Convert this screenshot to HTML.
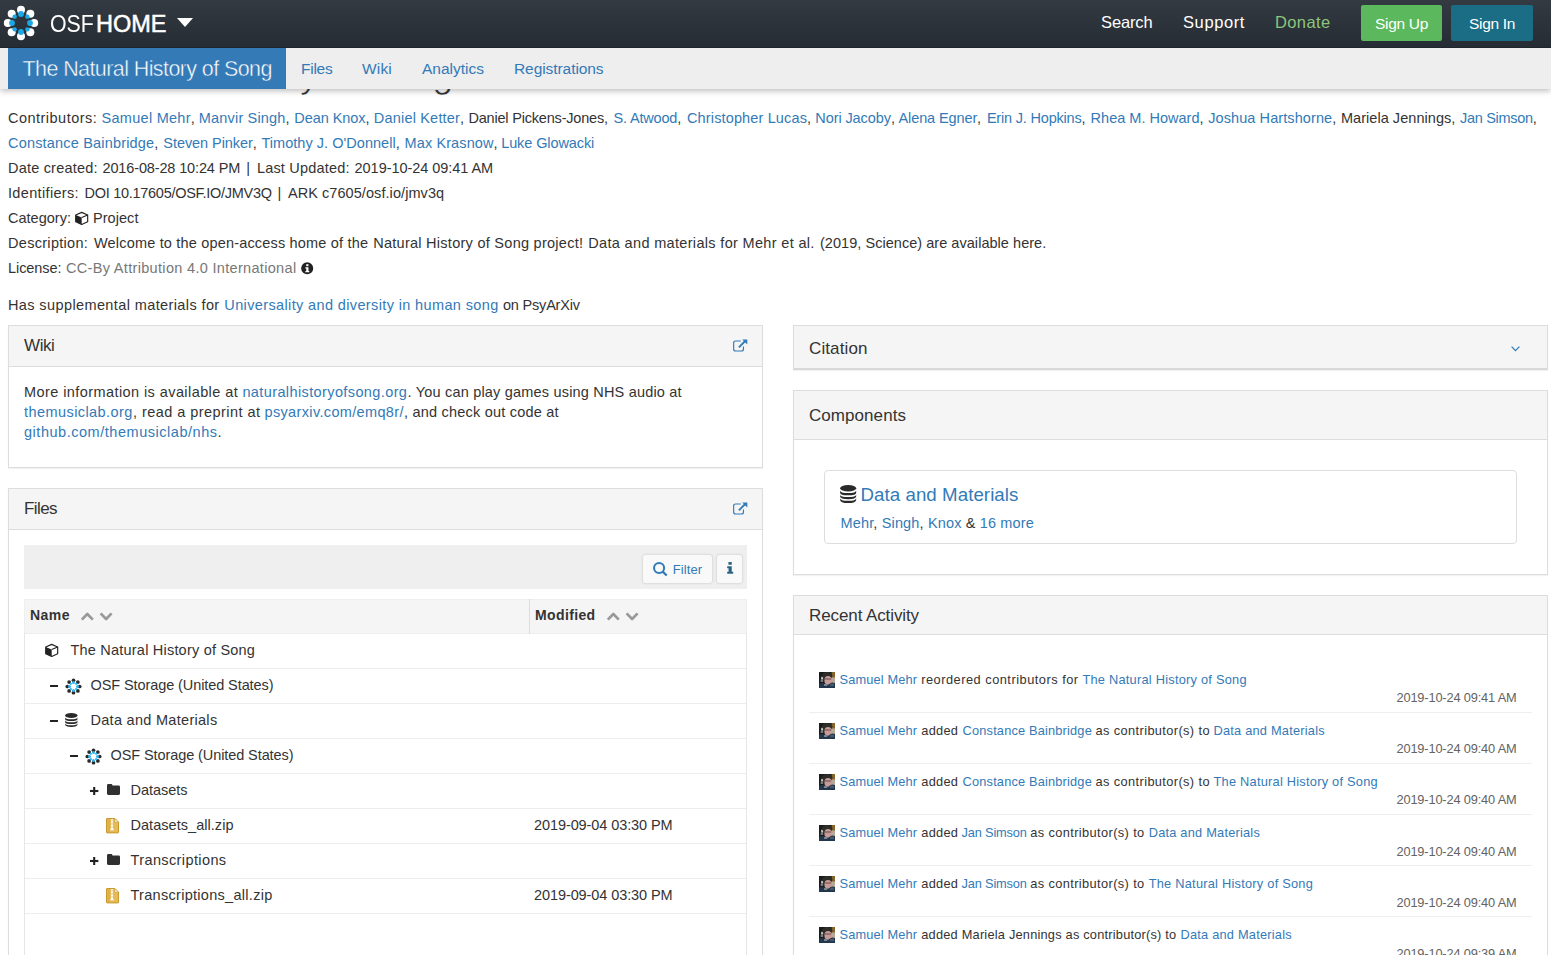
<!DOCTYPE html>
<html lang="en"><head>
<meta charset="utf-8">
<title>OSF | The Natural History of Song</title>
<style>
*{box-sizing:border-box}
html,body{margin:0;padding:0}
body{width:1551px;height:955px;overflow:hidden;background:#fff;color:#333;font-family:"Liberation Sans",sans-serif;font-size:14.5px;line-height:20px;position:relative}
a{color:#337ab7;text-decoration:none}
svg{display:block;position:absolute;overflow:visible}
.t{position:absolute;white-space:nowrap;line-height:20px;font-size:14.5px}
/* top navbar */
#nav{position:absolute;left:0;top:0;width:1551px;height:48px;background:linear-gradient(#333a42,#262c33);border-bottom:1px solid #1e252b;z-index:5}
#brand{font-size:23.5px;color:#fff;line-height:30px}
#brand2{font-size:23.5px;color:#fff;line-height:30px;-webkit-text-stroke:.5px #fff}
#caret{position:absolute;left:177px;top:18px;width:0;height:0;border-left:8px solid transparent;border-right:8px solid transparent;border-top:9px solid #fff}
.nl{font-size:16.5px;color:#fff}
.btn{position:absolute;top:5px;height:36px;color:#fff;border-radius:2px}
.btn span{font-size:15.5px;color:#fff}
/* project nav */
#pnav{position:absolute;left:0;top:48px;width:1551px;height:41px;background:#eee;box-shadow:0 2px 6px rgba(0,0,0,.26);z-index:4}
#ptab{position:absolute;left:8px;top:0;width:278px;height:41px;background:#337ab7}
#ptab span{font-size:21.5px;color:#fff;-webkit-text-stroke:.45px #337ab7}
.pl{font-size:15.5px;color:#337ab7}
#h2{font-size:38px;line-height:50px;color:#333;z-index:1;-webkit-text-stroke:.7px #fff}
/* panels */
.panel{position:absolute;background:#fff;border:1px solid #ddd;box-shadow:0 1px 1px rgba(0,0,0,.05)}
.ph{position:absolute;left:0;top:0;right:0;background:#f5f5f5;border-bottom:1px solid #ddd}
.pt{font-size:17px;color:#333}
.hr{position:absolute;height:1px;background:#eee}
.act{font-size:12.8px}
.dt{font-size:12.8px;color:#636363}
.row{position:absolute;left:25px;width:721px;height:1px;background:#ededed}
.av{position:absolute;width:16px;height:16px;left:819px;background:#2b2a2c;overflow:hidden}
.av svg{position:absolute;left:0;top:0;filter:blur(.6px)}
</style>
</head>
<body>
<div id="nav">
  <svg width="36" height="36" viewBox="-18 -18 36 36" style="left:3.4px;top:5.3px">
    <g fill="#fff">
      <circle cx="0" cy="-13.2" r="4"></circle><circle cx="9.33" cy="-9.33" r="4"></circle><circle cx="13.2" cy="0" r="4"></circle><circle cx="9.33" cy="9.33" r="4"></circle>
      <circle cx="0" cy="13.2" r="4"></circle><circle cx="-9.33" cy="9.33" r="4"></circle><circle cx="-13.2" cy="0" r="4"></circle><circle cx="-9.33" cy="-9.33" r="4"></circle>
    </g>
    <g fill="#1aa9e6">
      <circle cx="0" cy="-9" r="2.9"></circle><circle cx="6.36" cy="-6.36" r="2.2"></circle><circle cx="9" cy="0" r="2.9"></circle><circle cx="6.36" cy="6.36" r="2.2"></circle>
      <circle cx="0" cy="9" r="2.9"></circle><circle cx="-6.36" cy="6.36" r="2.2"></circle><circle cx="-9" cy="0" r="2.9"></circle><circle cx="-6.36" cy="-6.36" r="2.2"></circle>
    </g>
  </svg>
  <div id="brand" class="t" style="left: 49.7px; top: 8.5px;"><span style="display:inline-block;transform:scaleX(.908);transform-origin:0 50%">OSF</span></div>
  <div id="brand2" class="t" style="left: 95.9px; top: 8.5px;"><span style="letter-spacing: 0.05px;">HOME</span></div>
  <div id="caret"></div>
  <a class="t nl" style="left: 1101px; letter-spacing: -0.13px; top: 12px;">Search</a>
  <a class="t nl" style="left: 1183px; letter-spacing: 0.6px; top: 12px;">Support</a>
  <a class="t nl" style="left: 1275px; color: rgb(140, 198, 122); letter-spacing: 0.38px; top: 12px;">Donate</a>
  <div class="btn" style="left:1361px;width:81px;background:#5cb85c"><span class="t" style="left: 14px; letter-spacing: -0.31px; top: 8.9px;">Sign Up</span></div>
  <div class="btn" style="left:1451px;width:82px;background:#1b6d85"><span class="t" style="left: 18px; letter-spacing: -0.32px; top: 8.9px;">Sign In</span></div>
</div>
<div id="pnav">
  <div id="ptab"><span class="t" style="left: 14.5px; letter-spacing: -0.59px; top: 11.2px;">The Natural History of Song</span></div>
  <a class="t pl" style="left: 301px; letter-spacing: -0.25px; top: 10.5px;">Files</a>
  <a class="t pl" style="left: 362px; letter-spacing: 0.18px; top: 10.5px;">Wiki</a>
  <a class="t pl" style="left: 422px; letter-spacing: 0px; top: 10.5px;">Analytics</a>
  <a class="t pl" style="left: 514px; letter-spacing: -0.07px; top: 10.5px;">Registrations</a>
</div>
<div id="h2" class="t" style="left: 8px; letter-spacing: -0.9px; top: 48.5px;">The Natural History of Song</div>

<!-- metadata -->
<div class="t" style="left: 8px; top: 108px;"><span style="letter-spacing: 0.48px;">Contributors:</span></div>
<div class="t" style="left: 101.6px; top: 108px;"><a style="letter-spacing: 0.27px;">Samuel Mehr</a>,</div>
<div class="t" style="left: 198.8px; top: 108px;"><a style="letter-spacing: 0.18px;">Manvir Singh</a>,</div>
<div class="t" style="left: 294.3px; top: 108px;"><a style="letter-spacing: -0.07px;">Dean Knox</a>,</div>
<div class="t" style="left: 373.8px; top: 108px;"><a style="letter-spacing: 0.19px;">Daniel Ketter</a>,</div>
<div class="t" style="left: 468.4px; top: 108px;"><span style="letter-spacing: -0.19px;">Daniel Pickens-Jones</span>,</div>
<div class="t" style="left: 613.5px; top: 108px;"><a style="letter-spacing: -0.18px;">S. Atwood</a>,</div>
<div class="t" style="left: 687px; top: 108px;"><a style="letter-spacing: 0.14px;">Christopher Lucas</a>,</div>
<div class="t" style="left: 815.3px; top: 108px;"><a style="letter-spacing: -0.09px;">Nori Jacoby</a>,</div>
<div class="t" style="left: 898.5px; top: 108px;"><a style="letter-spacing: -0.11px;">Alena Egner</a>,</div>
<div class="t" style="left: 986.9px; top: 108px;"><a style="letter-spacing: -0.19px;">Erin J. Hopkins</a>,</div>
<div class="t" style="left: 1090.6px; top: 108px;"><a style="letter-spacing: 0.01px;">Rhea M. Howard</a>,</div>
<div class="t" style="left: 1208.2px; top: 108px;"><a style="letter-spacing: 0.09px;">Joshua Hartshorne</a>,</div>
<div class="t" style="left: 1340.9px; top: 108px;"><span style="letter-spacing: 0.05px;">Mariela Jennings</span>,</div>
<div class="t" style="left: 1460px; top: 108px;"><a style="letter-spacing: -0.31px;">Jan Simson</a>,</div>
<div class="t" style="left: 8px; top: 133px;"><a style="letter-spacing: 0.18px;">Constance Bainbridge</a>,</div>
<div class="t" style="left: 163.3px; top: 133px;"><a style="letter-spacing: -0.06px;">Steven Pinker</a>,</div>
<div class="t" style="left: 261.5px; top: 133px;"><a style="letter-spacing: 0.03px;">Timothy J. O'Donnell</a>,</div>
<div class="t" style="left: 404.6px; top: 133px;"><a style="letter-spacing: 0.1px;">Max Krasnow</a>,</div>
<div class="t" style="left: 501.2px; top: 133px;"><a style="letter-spacing: -0.1px;">Luke Glowacki</a></div>
<div class="t" style="left: 8px; top: 158px;"><span style="letter-spacing: 0.2px;">Date created:</span></div>
<div class="t" style="left: 102.5px; top: 158px;"><span style="letter-spacing: -0.14px;">2016-08-28 10:24 PM</span></div>
<div class="t" style="left: 246.3px; top: 158px;">|</div>
<div class="t" style="left: 256.9px; top: 158px;"><span style="letter-spacing: 0.2px;">Last Updated:</span></div>
<div class="t" style="left: 354.6px; top: 158px;"><span style="letter-spacing: -0.05px;">2019-10-24 09:41 AM</span></div>
<div class="t" style="left: 8px; top: 183px;"><span style="letter-spacing: 0.34px;">Identifiers:</span></div>
<div class="t" style="left: 84.5px; top: 183px;"><span style="letter-spacing: -0.28px;">DOI 10.17605/OSF.IO/JMV3Q</span></div>
<div class="t" style="left: 277.6px; top: 183px;">|</div>
<div class="t" style="left: 287.9px; top: 183px;"><span style="letter-spacing: 0.07px;">ARK c7605/osf.io/jmv3q</span></div>
<div class="t" style="left: 8px; letter-spacing: 0.01px; top: 208px;">Category:</div>
<svg width="13.4" height="12.8" viewBox="0 0 15 14" preserveAspectRatio="none" style="left:74.8px;top:211.8px"><path d="M7.5 0.4 L14.2 3.2 V10.6 L7.5 13.6 L0.8 10.6 V3.2 Z" fill="#fff" stroke="#222" stroke-width="1.3" stroke-linejoin="round"></path><path d="M0.8 3.2 L7.5 6.1 V13.6 L0.8 10.6 Z" fill="#222"></path><path d="M7.5 6.1 L14.2 3.2" stroke="#222" stroke-width="1.2" fill="none"></path></svg>
<div class="t" style="left: 93px; letter-spacing: 0.05px; top: 208px;">Project</div>
<div class="t" style="left: 8px; top: 233px;"><span style="letter-spacing: 0.3px;">Description:</span></div>
<div class="t" style="left: 94px; top: 233px;"><span style="letter-spacing: 0.18px;">Welcome to the open-access home of the</span></div>
<div class="t" style="left: 373.2px; top: 233px;"><span style="letter-spacing: 0.27px;">Natural History of Song project!</span></div>
<div class="t" style="left: 588.3px; top: 233px;"><span style="letter-spacing: 0.33px;">Data and materials for Mehr et al.</span></div>
<div class="t" style="left: 820px; top: 233px;"><span style="letter-spacing: 0.04px;">(2019, Science) are available here.</span></div>
<div class="t" style="left: 8px; letter-spacing: -0.06px; top: 258px;">License:</div>
<div class="t" style="left: 66px; color: rgb(119, 119, 119); letter-spacing: 0.32px; top: 258px;">CC-By Attribution 4.0 International</div>
<svg width="12.4" height="12.4" viewBox="0 0 13 13" style="left:300.8px;top:261.8px"><circle cx="6.5" cy="6.5" r="6.3" fill="#222"></circle><rect x="5.5" y="2.3" width="2.3" height="2.1" fill="#fff"></rect><path d="M4.6 5.6 H7.8 V9.4 H8.7 V10.7 H4.6 V9.4 H5.5 V6.9 H4.6 Z" fill="#fff"></path></svg>
<div class="t" style="left: 8px; top: 295px;"><span style="letter-spacing: 0.39px;">Has supplemental materials for</span></div>
<div class="t" style="left: 224.3px; top: 295px;"><a style="letter-spacing: 0.37px;">Universality and diversity in human song</a></div>
<div class="t" style="left: 503px; top: 295px;"><span style="letter-spacing: -0.2px;">on PsyArXiv</span></div>

<!-- Wiki panel -->
<div class="panel" style="left:8px;top:325px;width:755px;height:143px"><div class="ph" style="height:41px"></div></div>
<div class="t pt" style="left: 24px; letter-spacing: -0.4px; top: 336px;">Wiki</div>
<svg width="15" height="13" viewBox="0 0 15 13" style="left:733px;top:338.5px" fill="none" stroke="#337ab7"><path d="M7.8 1.95 H2.65 Q0.65 1.95 0.65 3.95 V9.95 Q0.65 11.95 2.65 11.95 H8.45 Q10.45 11.95 10.45 9.95 V7.6" stroke-width="1.15"></path><path d="M5.9 8.3 L12.2 2" stroke-width="1.9"></path><path d="M9.2 0.4 H14.3 V5.5 Z" fill="#337ab7" stroke="none"></path></svg>
<div class="t" style="left: 24px; top: 382px;"><span style="letter-spacing: 0.42px;">More information is available at</span></div>
<div class="t" style="left: 242.4px; top: 382px;"><a style="letter-spacing: 0.39px;">naturalhistoryofsong.org</a></div>
<div class="t" style="left: 407.6px; top: 382px;"><span style="letter-spacing: 0.19px;">. You can play games using NHS audio at</span></div>
<div class="t" style="left: 24px; top: 402px;"><a style="letter-spacing: 0.43px;">themusiclab.org</a></div>
<div class="t" style="left: 133px; top: 402px;"><span style="letter-spacing: 0.45px;">, read a preprint at</span></div>
<div class="t" style="left: 264.5px; top: 402px;"><a style="letter-spacing: 0.35px;">psyarxiv.com/emq8r/</a></div>
<div class="t" style="left: 404px; top: 402px;"><span style="letter-spacing: 0.21px;">, and check out code at</span></div>
<div class="t" style="left: 24px; letter-spacing: 0.53px; top: 422px;"><a>github.com/themusiclab/nhs</a>.</div>

<!-- Files panel -->
<div class="panel" style="left:8px;top:488px;width:755px;height:480px"><div class="ph" style="height:41px"></div></div>
<div class="t pt" style="left: 24px; letter-spacing: -0.58px; top: 499px;">Files</div>
<svg width="15" height="13" viewBox="0 0 15 13" style="left:733px;top:501.5px" fill="none" stroke="#337ab7"><path d="M7.8 1.95 H2.65 Q0.65 1.95 0.65 3.95 V9.95 Q0.65 11.95 2.65 11.95 H8.45 Q10.45 11.95 10.45 9.95 V7.6" stroke-width="1.15"></path><path d="M5.9 8.3 L12.2 2" stroke-width="1.9"></path><path d="M9.2 0.4 H14.3 V5.5 Z" fill="#337ab7" stroke="none"></path></svg>
<div style="position:absolute;left:24px;top:545px;width:723px;height:44px;background:#efefef"></div>
<div style="position:absolute;left:643px;top:555px;width:69px;height:28px;background:#f9f9f9;border-radius:2.5px;box-shadow:0 0 2.5px rgba(0,0,0,.22)"></div>
<svg width="15" height="15" viewBox="0 0 15 15" style="left:653px;top:562px" fill="none" stroke="#337ab7"><circle cx="6.1" cy="6" r="5.05" stroke-width="2.05"></circle><path d="M9.7 9.6 L13.7 13.5" stroke-width="2.3"></path></svg>
<a class="t" style="left: 672.8px; font-size: 13px; letter-spacing: 0.07px; top: 560px;">Filter</a>
<div style="position:absolute;left:717px;top:555px;width:25px;height:28px;background:#f9f9f9;border-radius:2.5px;box-shadow:0 0 2.5px rgba(0,0,0,.22)"></div>
<svg width="6.4" height="11.8" viewBox="0 0 7 12" preserveAspectRatio="none" style="left:726.6px;top:562.2px" fill="#2a6485"><rect x="1.6" y="0" width="3.6" height="2.8"></rect><path d="M0.2 4.2 H5.2 V9.8 H6.8 V12 H0.2 V9.8 H1.7 V6.4 H0.2 Z"></path></svg>

<!-- table header -->
<div style="position:absolute;left:24px;top:599px;width:723px;height:35px;background:#f5f5f5;border:1px solid #eee"></div>
<div style="position:absolute;left:529px;top:599px;width:1px;height:35px;background:#dcdcdc"></div>
<div style="position:absolute;left:24px;top:633px;width:1px;height:340px;background:#e6e6e6"></div>
<div style="position:absolute;left:746px;top:633px;width:1px;height:340px;background:#e6e6e6"></div>
<div class="t" style="left: 30px; font-weight: 700; font-size: 14px; letter-spacing: 0.46px; top: 605px;">Name</div>
<svg width="32" height="9" viewBox="0 0 32 9" style="left:81px;top:611.5px" fill="none" stroke="#999" stroke-width="2.7" stroke-linejoin="round"><path d="M0.8 7.6 L6.3 2 L11.8 7.6"></path><path d="M19.6 1.4 L25.1 7 L30.6 1.4"></path></svg>
<div class="t" style="left: 535px; font-weight: 700; font-size: 14px; letter-spacing: 0.37px; top: 605px;">Modified</div>
<svg width="32" height="9" viewBox="0 0 32 9" style="left:607px;top:611.5px" fill="none" stroke="#999" stroke-width="2.7" stroke-linejoin="round"><path d="M0.8 7.6 L6.3 2 L11.8 7.6"></path><path d="M19.6 1.4 L25.1 7 L30.6 1.4"></path></svg>
<div class="row" style="top:668px"></div><div class="row" style="top:703px"></div><div class="row" style="top:738px"></div><div class="row" style="top:773px"></div>
<div class="row" style="top:808px"></div><div class="row" style="top:843px"></div><div class="row" style="top:878px"></div><div class="row" style="top:913px"></div>

<!-- row 1 -->
<svg width="13.4" height="12.8" viewBox="0 0 15 14" preserveAspectRatio="none" style="left:44.8px;top:644px"><path d="M7.5 0.4 L14.2 3.2 V10.6 L7.5 13.6 L0.8 10.6 V3.2 Z" fill="#fff" stroke="#222" stroke-width="1.3" stroke-linejoin="round"></path><path d="M0.8 3.2 L7.5 6.1 V13.6 L0.8 10.6 Z" fill="#222"></path><path d="M7.5 6.1 L14.2 3.2" stroke="#222" stroke-width="1.2" fill="none"></path></svg>
<div class="t" style="left: 70.5px; letter-spacing: 0.21px; top: 639.5px;">The Natural History of Song</div>
<!-- row 2 -->
<div style="position:absolute;left:50px;top:685.2px;width:8px;height:2.1px;background:#222"></div>
<svg width="17" height="17" viewBox="-8.5 -8.5 17 17" style="left:64.5px;top:677.5px">
  <g fill="#2a2a2a"><circle cx="0" cy="-6.2" r="1.85"></circle><circle cx="4.38" cy="-4.38" r="1.85"></circle><circle cx="6.2" cy="0" r="1.85"></circle><circle cx="4.38" cy="4.38" r="1.85"></circle><circle cx="0" cy="6.2" r="1.85"></circle><circle cx="-4.38" cy="4.38" r="1.85"></circle><circle cx="-6.2" cy="0" r="1.85"></circle><circle cx="-4.38" cy="-4.38" r="1.85"></circle></g>
  <g fill="#2cb3f2"><circle cx="0" cy="-4" r="1.5"></circle><circle cx="2.7" cy="-2.7" r="1.15"></circle><circle cx="4" cy="0" r="1.5"></circle><circle cx="2.7" cy="2.7" r="1.15"></circle><circle cx="0" cy="4" r="1.5"></circle><circle cx="-2.7" cy="2.7" r="1.15"></circle><circle cx="-4" cy="0" r="1.5"></circle><circle cx="-2.7" cy="-2.7" r="1.15"></circle></g>
</svg>
<div class="t" style="left: 90.5px; letter-spacing: -0.09px; top: 674.5px;">OSF Storage (United States)</div>
<!-- row 3 -->
<div style="position:absolute;left:50px;top:719.9px;width:8px;height:2.1px;background:#222"></div>
<svg width="12.6" height="14" viewBox="0 0 13 14" preserveAspectRatio="none" style="left:64.8px;top:713px" fill="#2a2a2a"><ellipse cx="6.5" cy="2.5" rx="6.4" ry="2.5"></ellipse><path d="M0.1 4.3 Q0.1 6.3 6.5 6.3 T12.9 4.3 V6 Q12.9 8 6.5 8 T0.1 6 Z"></path><path d="M0.1 7.3 Q0.1 9.3 6.5 9.3 T12.9 7.3 V9 Q12.9 11 6.5 11 T0.1 9 Z"></path><path d="M0.1 10.3 Q0.1 12.3 6.5 12.3 T12.9 10.3 V11.6 Q12.9 14 6.5 14 T0.1 11.6 Z"></path></svg>
<div class="t" style="left: 90.5px; letter-spacing: 0.29px; top: 709.5px;">Data and Materials</div>
<!-- row 4 -->
<div style="position:absolute;left:70px;top:754.9px;width:8px;height:2.1px;background:#222"></div>
<svg width="17" height="17" viewBox="-8.5 -8.5 17 17" style="left:84.5px;top:747.5px">
  <g fill="#2a2a2a"><circle cx="0" cy="-6.2" r="1.85"></circle><circle cx="4.38" cy="-4.38" r="1.85"></circle><circle cx="6.2" cy="0" r="1.85"></circle><circle cx="4.38" cy="4.38" r="1.85"></circle><circle cx="0" cy="6.2" r="1.85"></circle><circle cx="-4.38" cy="4.38" r="1.85"></circle><circle cx="-6.2" cy="0" r="1.85"></circle><circle cx="-4.38" cy="-4.38" r="1.85"></circle></g>
  <g fill="#2cb3f2"><circle cx="0" cy="-4" r="1.5"></circle><circle cx="2.7" cy="-2.7" r="1.15"></circle><circle cx="4" cy="0" r="1.5"></circle><circle cx="2.7" cy="2.7" r="1.15"></circle><circle cx="0" cy="4" r="1.5"></circle><circle cx="-2.7" cy="2.7" r="1.15"></circle><circle cx="-4" cy="0" r="1.5"></circle><circle cx="-2.7" cy="-2.7" r="1.15"></circle></g>
</svg>
<div class="t" style="left: 110.5px; letter-spacing: -0.09px; top: 744.5px;">OSF Storage (United States)</div>
<!-- row 5 -->
<svg width="8.4" height="8" viewBox="0 0 8.4 8" style="left:89.7px;top:787.1px" fill="#222"><rect x="0" y="2.95" width="8.4" height="2.1"></rect><rect x="3.15" y="0" width="2.1" height="8"></rect></svg>
<svg width="13" height="10.9" viewBox="0 0 14 11" preserveAspectRatio="none" style="left:107.1px;top:784px" fill="#303030"><path d="M0 1.4 Q0 0 1.4 0 H4.6 Q5.8 0 5.8 1.2 V1.6 H12.6 Q14 1.6 14 3 V9.6 Q14 11 12.6 11 H1.4 Q0 11 0 9.6 Z"></path></svg>
<div class="t" style="left: 130.5px; letter-spacing: -0.03px; top: 779.5px;">Datasets</div>
<!-- row 6 -->
<svg width="13" height="15.4" viewBox="0 0 13 15.4" style="left:106px;top:817.8px"><path d="M0.5 1 Q0.5 0.5 1 0.5 H8.8 L12.5 4.2 V14.4 Q12.5 14.9 12 14.9 H1 Q0.5 14.9 0.5 14.4Z" fill="#e6bb55" stroke="#c7982f" stroke-width="1"></path><rect x="1.5" y="1.5" width="2.3" height="12.4" fill="#d6a53a" opacity=".55"></rect><path d="M8.8 0.5 V4.2 H12.5Z" fill="#fffdf2" stroke="#c7982f" stroke-width=".7"></path><path d="M6 1.3 V9.4" stroke="#fff" stroke-width="2.1" stroke-dasharray=".95 .5" fill="none"></path><path d="M6 8.4 L8 12.2 H4 Z" fill="#fff"></path></svg>
<div class="t" style="left: 130.5px; letter-spacing: 0.04px; top: 814.5px;">Datasets_all.zip</div>
<div class="t" style="left: 534px; letter-spacing: -0.09px; top: 814.5px;">2019-09-04 03:30 PM</div>
<!-- row 7 -->
<svg width="8.4" height="8" viewBox="0 0 8.4 8" style="left:89.7px;top:857.1px" fill="#222"><rect x="0" y="2.95" width="8.4" height="2.1"></rect><rect x="3.15" y="0" width="2.1" height="8"></rect></svg>
<svg width="13" height="10.9" viewBox="0 0 14 11" preserveAspectRatio="none" style="left:107.1px;top:854px" fill="#303030"><path d="M0 1.4 Q0 0 1.4 0 H4.6 Q5.8 0 5.8 1.2 V1.6 H12.6 Q14 1.6 14 3 V9.6 Q14 11 12.6 11 H1.4 Q0 11 0 9.6 Z"></path></svg>
<div class="t" style="left: 130.5px; letter-spacing: 0.39px; top: 849.5px;">Transcriptions</div>
<!-- row 8 -->
<svg width="13" height="15.4" viewBox="0 0 13 15.4" style="left:106px;top:887.8px"><path d="M0.5 1 Q0.5 0.5 1 0.5 H8.8 L12.5 4.2 V14.4 Q12.5 14.9 12 14.9 H1 Q0.5 14.9 0.5 14.4Z" fill="#e6bb55" stroke="#c7982f" stroke-width="1"></path><rect x="1.5" y="1.5" width="2.3" height="12.4" fill="#d6a53a" opacity=".55"></rect><path d="M8.8 0.5 V4.2 H12.5Z" fill="#fffdf2" stroke="#c7982f" stroke-width=".7"></path><path d="M6 1.3 V9.4" stroke="#fff" stroke-width="2.1" stroke-dasharray=".95 .5" fill="none"></path><path d="M6 8.4 L8 12.2 H4 Z" fill="#fff"></path></svg>
<div class="t" style="left: 130.5px; letter-spacing: 0.29px; top: 884.5px;">Transcriptions_all.zip</div>
<div class="t" style="left: 534px; letter-spacing: -0.09px; top: 884.5px;">2019-09-04 03:30 PM</div>

<!-- Citation -->
<div class="panel" style="left:793px;top:325px;width:755px;height:45px;border-bottom:2px solid #d8d8d8;background:#f5f5f5"></div>
<div class="t pt" style="left: 809px; letter-spacing: 0.11px; top: 339px;">Citation</div>
<svg width="9" height="6" viewBox="0 0 9 6" style="left:1510.5px;top:345.5px" fill="none" stroke="#337ab7" stroke-width="1.3"><path d="M0.6 0.6 L4.5 4.6 L8.4 0.6"></path></svg>

<!-- Components -->
<div class="panel" style="left:793px;top:390px;width:755px;height:185px"><div class="ph" style="height:49px"></div></div>
<div class="t pt" style="left: 809px; letter-spacing: 0.06px; top: 405.5px;">Components</div>
<div style="position:absolute;left:824px;top:470px;width:693px;height:74px;border:1px solid #ddd;border-radius:4px"></div>
<svg width="16.3" height="18" viewBox="0 0 13 14" preserveAspectRatio="none" style="left:839.8px;top:485.4px" fill="#2a2a2a"><ellipse cx="6.5" cy="2.5" rx="6.4" ry="2.5"></ellipse><path d="M0.1 4.3 Q0.1 6.3 6.5 6.3 T12.9 4.3 V6 Q12.9 8 6.5 8 T0.1 6 Z"></path><path d="M0.1 7.3 Q0.1 9.3 6.5 9.3 T12.9 7.3 V9 Q12.9 11 6.5 11 T0.1 9 Z"></path><path d="M0.1 10.3 Q0.1 12.3 6.5 12.3 T12.9 10.3 V11.6 Q12.9 14 6.5 14 T0.1 11.6 Z"></path></svg>
<a class="t" style="left: 860.5px; font-size: 18.7px; line-height: 24px; letter-spacing: 0.06px; top: 483px;">Data and Materials</a>
<div class="t" style="left: 840.5px; letter-spacing: 0.15px; top: 513px;"><a>Mehr</a>, <a>Singh</a>, <a>Knox</a> &amp; <a>16 more</a></div>

<!-- Recent Activity -->
<div class="panel" style="left:793px;top:595px;width:755px;height:380px"><div class="ph" style="height:39px"></div></div>
<div class="t pt" style="left: 809px; letter-spacing: -0.1px; top: 605.7px;">Recent Activity</div>
<div class="hr" style="left:809px;top:712px;width:723px"></div>
<div class="hr" style="left:809px;top:763px;width:723px"></div>
<div class="hr" style="left:809px;top:814px;width:723px"></div>
<div class="hr" style="left:809px;top:865px;width:723px"></div>
<div class="hr" style="left:809px;top:916px;width:723px"></div>

<div class="av" style="top:672px"><svg width="16" height="16" viewBox="0 0 16 16"><rect width="16" height="16" fill="#1b1a1c"></rect><rect x="12.6" y="0" width="3.4" height="6.5" fill="#85652c"></rect><rect x="11.8" y="5.5" width="4.2" height="5.6" fill="#b8a898"></rect><rect x="2.2" y="4.8" width="2" height="2.8" fill="#cfcfcf"></rect><rect x="1.6" y="7.6" width="2.6" height="2.4" fill="#77797b"></rect><ellipse cx="8.2" cy="3.6" rx="5.2" ry="3.6" fill="#2e2d27"></ellipse><ellipse cx="9" cy="8.4" rx="3.6" ry="4.4" fill="#c79c98"></ellipse><rect x="5.8" y="6.5" width="6.4" height="1" fill="#6a4a48"></rect><path d="M0 11.6 Q4 10 6.5 12 L9 13.6 L11.5 11 Q14 10 16 11.2 V16 H0Z" fill="#22364c"></path><rect x="5" y="12" width="3.4" height="2" fill="#7a828c"></rect><rect x="11" y="11.6" width="4" height="2.6" fill="#46566c"></rect></svg></div>
<div class="t act" style="left: 839.6px; top: 670.3px;"><a style="letter-spacing: 0.14px;">Samuel Mehr</a></div>
<div class="t act" style="left: 921.2px; top: 670.3px;"><span style="letter-spacing: 0.5px;">reordered contributors for</span></div>
<div class="t act" style="left: 1082.4px; top: 670.3px;"><a style="letter-spacing: 0.24px;">The Natural History of Song</a></div>
<div class="t dt" style="left: 1396.5px; letter-spacing: -0.16px; top: 687.7px;">2019-10-24 09:41 AM</div>

<div class="av" style="top:723px"><svg width="16" height="16" viewBox="0 0 16 16"><rect width="16" height="16" fill="#1b1a1c"></rect><rect x="12.6" y="0" width="3.4" height="6.5" fill="#85652c"></rect><rect x="11.8" y="5.5" width="4.2" height="5.6" fill="#b8a898"></rect><rect x="2.2" y="4.8" width="2" height="2.8" fill="#cfcfcf"></rect><rect x="1.6" y="7.6" width="2.6" height="2.4" fill="#77797b"></rect><ellipse cx="8.2" cy="3.6" rx="5.2" ry="3.6" fill="#2e2d27"></ellipse><ellipse cx="9" cy="8.4" rx="3.6" ry="4.4" fill="#c79c98"></ellipse><rect x="5.8" y="6.5" width="6.4" height="1" fill="#6a4a48"></rect><path d="M0 11.6 Q4 10 6.5 12 L9 13.6 L11.5 11 Q14 10 16 11.2 V16 H0Z" fill="#22364c"></path><rect x="5" y="12" width="3.4" height="2" fill="#7a828c"></rect><rect x="11" y="11.6" width="4" height="2.6" fill="#46566c"></rect></svg></div>
<div class="t act" style="left: 839.6px; top: 721.3px;"><a style="letter-spacing: 0.14px;">Samuel Mehr</a></div>
<div class="t act" style="left: 921.3px; top: 721.3px;"><span style="letter-spacing: 0.26px;">added</span></div>
<div class="t act" style="left: 962.6px; top: 721.3px;"><a style="letter-spacing: 0.17px;">Constance Bainbridge</a></div>
<div class="t act" style="left: 1095.6px; top: 721.3px;"><span style="letter-spacing: 0.38px;">as contributor(s) to</span></div>
<div class="t act" style="left: 1213.5px; top: 721.3px;"><a style="letter-spacing: 0.22px;">Data and Materials</a></div>
<div class="t dt" style="left: 1396.5px; letter-spacing: -0.16px; top: 738.7px;">2019-10-24 09:40 AM</div>

<div class="av" style="top:774px"><svg width="16" height="16" viewBox="0 0 16 16"><rect width="16" height="16" fill="#1b1a1c"></rect><rect x="12.6" y="0" width="3.4" height="6.5" fill="#85652c"></rect><rect x="11.8" y="5.5" width="4.2" height="5.6" fill="#b8a898"></rect><rect x="2.2" y="4.8" width="2" height="2.8" fill="#cfcfcf"></rect><rect x="1.6" y="7.6" width="2.6" height="2.4" fill="#77797b"></rect><ellipse cx="8.2" cy="3.6" rx="5.2" ry="3.6" fill="#2e2d27"></ellipse><ellipse cx="9" cy="8.4" rx="3.6" ry="4.4" fill="#c79c98"></ellipse><rect x="5.8" y="6.5" width="6.4" height="1" fill="#6a4a48"></rect><path d="M0 11.6 Q4 10 6.5 12 L9 13.6 L11.5 11 Q14 10 16 11.2 V16 H0Z" fill="#22364c"></path><rect x="5" y="12" width="3.4" height="2" fill="#7a828c"></rect><rect x="11" y="11.6" width="4" height="2.6" fill="#46566c"></rect></svg></div>
<div class="t act" style="left: 839.6px; top: 772.3px;"><a style="letter-spacing: 0.14px;">Samuel Mehr</a></div>
<div class="t act" style="left: 921.3px; top: 772.3px;"><span style="letter-spacing: 0.26px;">added</span></div>
<div class="t act" style="left: 962.6px; top: 772.3px;"><a style="letter-spacing: 0.17px;">Constance Bainbridge</a></div>
<div class="t act" style="left: 1095.6px; top: 772.3px;"><span style="letter-spacing: 0.38px;">as contributor(s) to</span></div>
<div class="t act" style="left: 1213.5px; top: 772.3px;"><a style="letter-spacing: 0.24px;">The Natural History of Song</a></div>
<div class="t dt" style="left: 1396.5px; letter-spacing: -0.16px; top: 790.3px;">2019-10-24 09:40 AM</div>

<div class="av" style="top:825px"><svg width="16" height="16" viewBox="0 0 16 16"><rect width="16" height="16" fill="#1b1a1c"></rect><rect x="12.6" y="0" width="3.4" height="6.5" fill="#85652c"></rect><rect x="11.8" y="5.5" width="4.2" height="5.6" fill="#b8a898"></rect><rect x="2.2" y="4.8" width="2" height="2.8" fill="#cfcfcf"></rect><rect x="1.6" y="7.6" width="2.6" height="2.4" fill="#77797b"></rect><ellipse cx="8.2" cy="3.6" rx="5.2" ry="3.6" fill="#2e2d27"></ellipse><ellipse cx="9" cy="8.4" rx="3.6" ry="4.4" fill="#c79c98"></ellipse><rect x="5.8" y="6.5" width="6.4" height="1" fill="#6a4a48"></rect><path d="M0 11.6 Q4 10 6.5 12 L9 13.6 L11.5 11 Q14 10 16 11.2 V16 H0Z" fill="#22364c"></path><rect x="5" y="12" width="3.4" height="2" fill="#7a828c"></rect><rect x="11" y="11.6" width="4" height="2.6" fill="#46566c"></rect></svg></div>
<div class="t act" style="left: 839.6px; top: 823.3px;"><a style="letter-spacing: 0.14px;">Samuel Mehr</a></div>
<div class="t act" style="left: 921.3px; top: 823.3px;"><span style="letter-spacing: 0.26px;">added</span></div>
<div class="t act" style="left: 961.6px; top: 823.3px;"><a style="letter-spacing: -0.18px;">Jan Simson</a></div>
<div class="t act" style="left: 1030.3px; top: 823.3px;"><span style="letter-spacing: 0.38px;">as contributor(s) to</span></div>
<div class="t act" style="left: 1148.7px; top: 823.3px;"><a style="letter-spacing: 0.22px;">Data and Materials</a></div>
<div class="t dt" style="left: 1396.5px; letter-spacing: -0.16px; top: 841.5px;">2019-10-24 09:40 AM</div>

<div class="av" style="top:876px"><svg width="16" height="16" viewBox="0 0 16 16"><rect width="16" height="16" fill="#1b1a1c"></rect><rect x="12.6" y="0" width="3.4" height="6.5" fill="#85652c"></rect><rect x="11.8" y="5.5" width="4.2" height="5.6" fill="#b8a898"></rect><rect x="2.2" y="4.8" width="2" height="2.8" fill="#cfcfcf"></rect><rect x="1.6" y="7.6" width="2.6" height="2.4" fill="#77797b"></rect><ellipse cx="8.2" cy="3.6" rx="5.2" ry="3.6" fill="#2e2d27"></ellipse><ellipse cx="9" cy="8.4" rx="3.6" ry="4.4" fill="#c79c98"></ellipse><rect x="5.8" y="6.5" width="6.4" height="1" fill="#6a4a48"></rect><path d="M0 11.6 Q4 10 6.5 12 L9 13.6 L11.5 11 Q14 10 16 11.2 V16 H0Z" fill="#22364c"></path><rect x="5" y="12" width="3.4" height="2" fill="#7a828c"></rect><rect x="11" y="11.6" width="4" height="2.6" fill="#46566c"></rect></svg></div>
<div class="t act" style="left: 839.6px; top: 874.3px;"><a style="letter-spacing: 0.14px;">Samuel Mehr</a></div>
<div class="t act" style="left: 921.3px; top: 874.3px;"><span style="letter-spacing: 0.26px;">added</span></div>
<div class="t act" style="left: 961.6px; top: 874.3px;"><a style="letter-spacing: -0.18px;">Jan Simson</a></div>
<div class="t act" style="left: 1030.3px; top: 874.3px;"><span style="letter-spacing: 0.38px;">as contributor(s) to</span></div>
<div class="t act" style="left: 1148.7px; top: 874.3px;"><a style="letter-spacing: 0.24px;">The Natural History of Song</a></div>
<div class="t dt" style="left: 1396.5px; letter-spacing: -0.16px; top: 892.5px;">2019-10-24 09:40 AM</div>

<div class="av" style="top:927px"><svg width="16" height="16" viewBox="0 0 16 16"><rect width="16" height="16" fill="#1b1a1c"></rect><rect x="12.6" y="0" width="3.4" height="6.5" fill="#85652c"></rect><rect x="11.8" y="5.5" width="4.2" height="5.6" fill="#b8a898"></rect><rect x="2.2" y="4.8" width="2" height="2.8" fill="#cfcfcf"></rect><rect x="1.6" y="7.6" width="2.6" height="2.4" fill="#77797b"></rect><ellipse cx="8.2" cy="3.6" rx="5.2" ry="3.6" fill="#2e2d27"></ellipse><ellipse cx="9" cy="8.4" rx="3.6" ry="4.4" fill="#c79c98"></ellipse><rect x="5.8" y="6.5" width="6.4" height="1" fill="#6a4a48"></rect><path d="M0 11.6 Q4 10 6.5 12 L9 13.6 L11.5 11 Q14 10 16 11.2 V16 H0Z" fill="#22364c"></path><rect x="5" y="12" width="3.4" height="2" fill="#7a828c"></rect><rect x="11" y="11.6" width="4" height="2.6" fill="#46566c"></rect></svg></div>
<div class="t act" style="left: 839.6px; top: 925.3px;"><a style="letter-spacing: 0.14px;">Samuel Mehr</a></div>
<div class="t act" style="left: 921.3px; top: 925.3px;"><span style="letter-spacing: 0.21px;">added Mariela Jennings as contributor(s) to</span></div>
<div class="t act" style="left: 1180.5px; top: 925.3px;"><a style="letter-spacing: 0.22px;">Data and Materials</a></div>
<div class="t dt" style="left: 1396.5px; letter-spacing: -0.16px; top: 943.5px;">2019-10-24 09:39 AM</div>


</body></html>
